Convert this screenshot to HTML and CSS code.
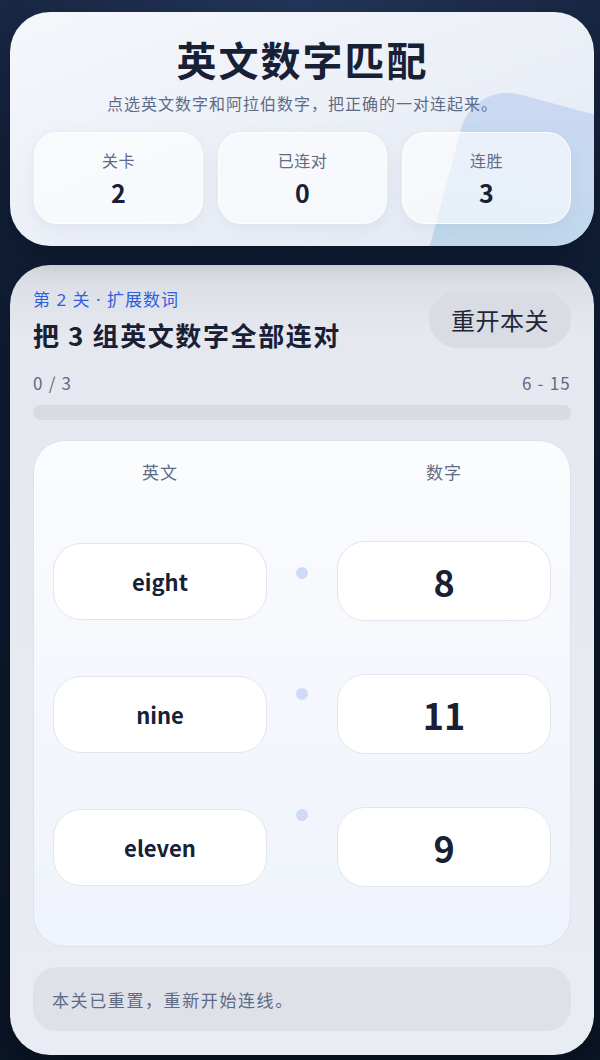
FILE: index.html
```html
<!DOCTYPE html>
<html lang="zh-CN">
<head>
<meta charset="utf-8">
<title>英文数字匹配</title>
<link rel="stylesheet" href="styles.css">
</head>
<body>
<main class="page">
  <section class="hero">
    <div class="blob"></div>
    <h1 class="hero-title">英文数字匹配</h1>
    <p class="hero-sub">点选英文数字和阿拉伯数字，把正确的一对连起来。</p>
    <div class="stats">
      <div class="stat"><div class="stat-label">关卡</div><div class="stat-value">2</div></div>
      <div class="stat"><div class="stat-label">已连对</div><div class="stat-value">0</div></div>
      <div class="stat"><div class="stat-label">连胜</div><div class="stat-value">3</div></div>
    </div>
  </section>

  <section class="game">
    <div class="game-head">
      <div class="game-head-text">
        <div class="eyebrow">第 2 关 · 扩展数词</div>
        <h2 class="game-title">把 3 组英文数字全部连对</h2>
      </div>
      <button class="reset-btn">重开本关</button>
    </div>
    <div class="meta">
      <span>0 / 3</span>
      <span>6 - 15</span>
    </div>
    <div class="progress"><div class="progress-fill"></div></div>

    <div class="board">
      <div class="board-row board-head">
        <div class="col-label">英文</div>
        <div></div>
        <div class="col-label">数字</div>
      </div>
      <div class="board-row">
        <div class="tile tile-word">eight</div>
        <div class="dot-cell"><span class="dot dot-1"></span></div>
        <div class="tile tile-num">8</div>
      </div>
      <div class="board-row">
        <div class="tile tile-word">nine</div>
        <div class="dot-cell"><span class="dot dot-2"></span></div>
        <div class="tile tile-num">11</div>
      </div>
      <div class="board-row">
        <div class="tile tile-word">eleven</div>
        <div class="dot-cell"><span class="dot dot-3"></span></div>
        <div class="tile tile-num">9</div>
      </div>
    </div>

    <div class="message">本关已重置，重新开始连线。</div>
  </section>
</main>
</body>
</html>
```

FILE: styles.css
```css
* { box-sizing: border-box; }

html, body {
  margin: 0;
  padding: 0;
}

body {
  width: 600px;
  min-height: 1060px;
  font-family: "Noto Sans CJK SC", "Noto Sans", sans-serif;
  color: #182036;
  background:
    radial-gradient(ellipse 420px 260px at 50% 0%, #24365a 0%, rgba(30,45,75,0) 100%),
    linear-gradient(180deg, #13213b 0%, #0d1a30 50%, #0a1526 100%);
}

.page {
  padding: 12px 6px 5px 10px;
  display: flex;
  flex-direction: column;
  gap: 19px;
}

/* ---------- hero ---------- */
.hero {
  position: relative;
  overflow: hidden;
  border-radius: 40px;
  padding: 23px 23px 22px 24px;
  background: linear-gradient(160deg, #f5f7fb 0%, #eaeef6 60%, #e2e8f3 100%);
  box-shadow: 0 10px 30px rgba(0,0,0,0.25);
}

.blob {
  position: absolute;
  left: 430px;
  top: 96px;
  width: 230px;
  height: 230px;
  border-radius: 48px;
  transform: rotate(15deg);
  background: linear-gradient(180deg, rgba(192,210,242,0.75) 0%, rgba(178,212,228,0.85) 100%);
}

.hero-title {
  position: relative;
  margin: 0;
  text-align: center;
  font-size: 40px;
  line-height: 48px;
  font-weight: 700;
  color: #182036;
  letter-spacing: 2px;
}

.hero-sub {
  position: relative;
  margin: 9px 0 0;
  text-align: center;
  font-size: 16px;
  line-height: 22px;
  letter-spacing: 1px;
  color: #5d6b86;
}

.stats {
  position: relative;
  margin-top: 18px;
  display: grid;
  grid-template-columns: 1fr 1fr 1fr;
  gap: 15px;
}

.stat {
  height: 92px;
  border-radius: 24px;
  background: rgba(255,255,255,0.62);
  border: 1px solid rgba(255,255,255,0.85);
  box-shadow: 0 4px 14px rgba(120,135,170,0.10);
  padding-top: 17px;
  text-align: center;
}

.stat-label {
  font-size: 16px;
  line-height: 20px;
  letter-spacing: 0.5px;
  color: #5d6b86;
}

.stat-value {
  margin-top: 7px;
  font-size: 25px;
  line-height: 30px;
  font-weight: 700;
  color: #182036;
}

/* ---------- game card ---------- */
.game {
  border-radius: 40px;
  padding: 25px 23px 24px 23px;
  background: linear-gradient(180deg, #d9dce3 0%, #e5e8ef 70px, #e9ecf3 100%);
  box-shadow: 0 10px 30px rgba(0,0,0,0.3);
}

.game-head {
  display: flex;
  justify-content: space-between;
  align-items: flex-start;
}

.eyebrow {
  font-family: "Noto Sans", "Noto Sans CJK SC", sans-serif;
  font-size: 17px;
  line-height: 20px;
  letter-spacing: 1px;
  color: #2d5fe0;
}

.game-title {
  margin: 10px 0 0;
  font-size: 26px;
  line-height: 30px;
  font-weight: 700;
  letter-spacing: 1.6px;
  color: #182036;
}

.reset-btn {
  margin-top: 1px;
  width: 142px;
  height: 57px;
  border: none;
  border-radius: 29px;
  background: #d9dce3;
  font-family: inherit;
  font-size: 24px;
  letter-spacing: 0.5px;
  color: #1f2638;
  padding: 0;
}

.meta {
  margin-top: 23px;
  display: flex;
  justify-content: space-between;
  font-size: 17px;
  line-height: 20px;
  color: #5d6b86;
  letter-spacing: 1.2px;
}

.progress {
  margin-top: 12px;
  height: 15px;
  border-radius: 8px;
  background: #d8dbe3;
  overflow: hidden;
}

.progress-fill {
  width: 0;
  height: 100%;
  background: #2d5fe0;
}

/* ---------- board ---------- */
.board {
  margin-top: 20px;
  border-radius: 32px;
  border: 1px solid #dde2ec;
  background: linear-gradient(180deg, #fbfcfe 0%, #f3f6fc 60%, #eff3fb 100%);
  padding: 21px 19px 59px;
  display: flex;
  flex-direction: column;
  gap: 53px;
}

.board-row {
  display: grid;
  grid-template-columns: 214px 1fr 214px;
  align-items: center;
}

.board-head {
  margin-bottom: 6px;
}

.col-label {
  text-align: center;
  font-size: 17px;
  line-height: 20px;
  letter-spacing: 1px;
  color: #5d6b86;
}

.tile {
  display: flex;
  align-items: center;
  justify-content: center;
  background: #ffffff;
  border: 1px solid #e1e5ee;
  border-radius: 28px;
  color: #182036;
  font-weight: 700;
}

.tile-word {
  height: 77px;
  font-size: 22px;
}

.tile-num {
  height: 80px;
  font-size: 36px;
}

.dot-cell {
  display: flex;
  justify-content: center;
}

.dot {
  width: 12px;
  height: 12px;
  border-radius: 50%;
  background: #cfdaf6;
}

.dot-1 { transform: translateY(-8px); }
.dot-2 { transform: translateY(-20px); }
.dot-3 { transform: translateY(-32px); }

/* ---------- message ---------- */
.message {
  margin-top: 20px;
  height: 64px;
  border-radius: 24px;
  background: #dfe1e9;
  padding: 0 19px;
  display: flex;
  align-items: center;
  font-size: 17px;
  letter-spacing: 1.6px;
  color: #5d6b86;
}
```
